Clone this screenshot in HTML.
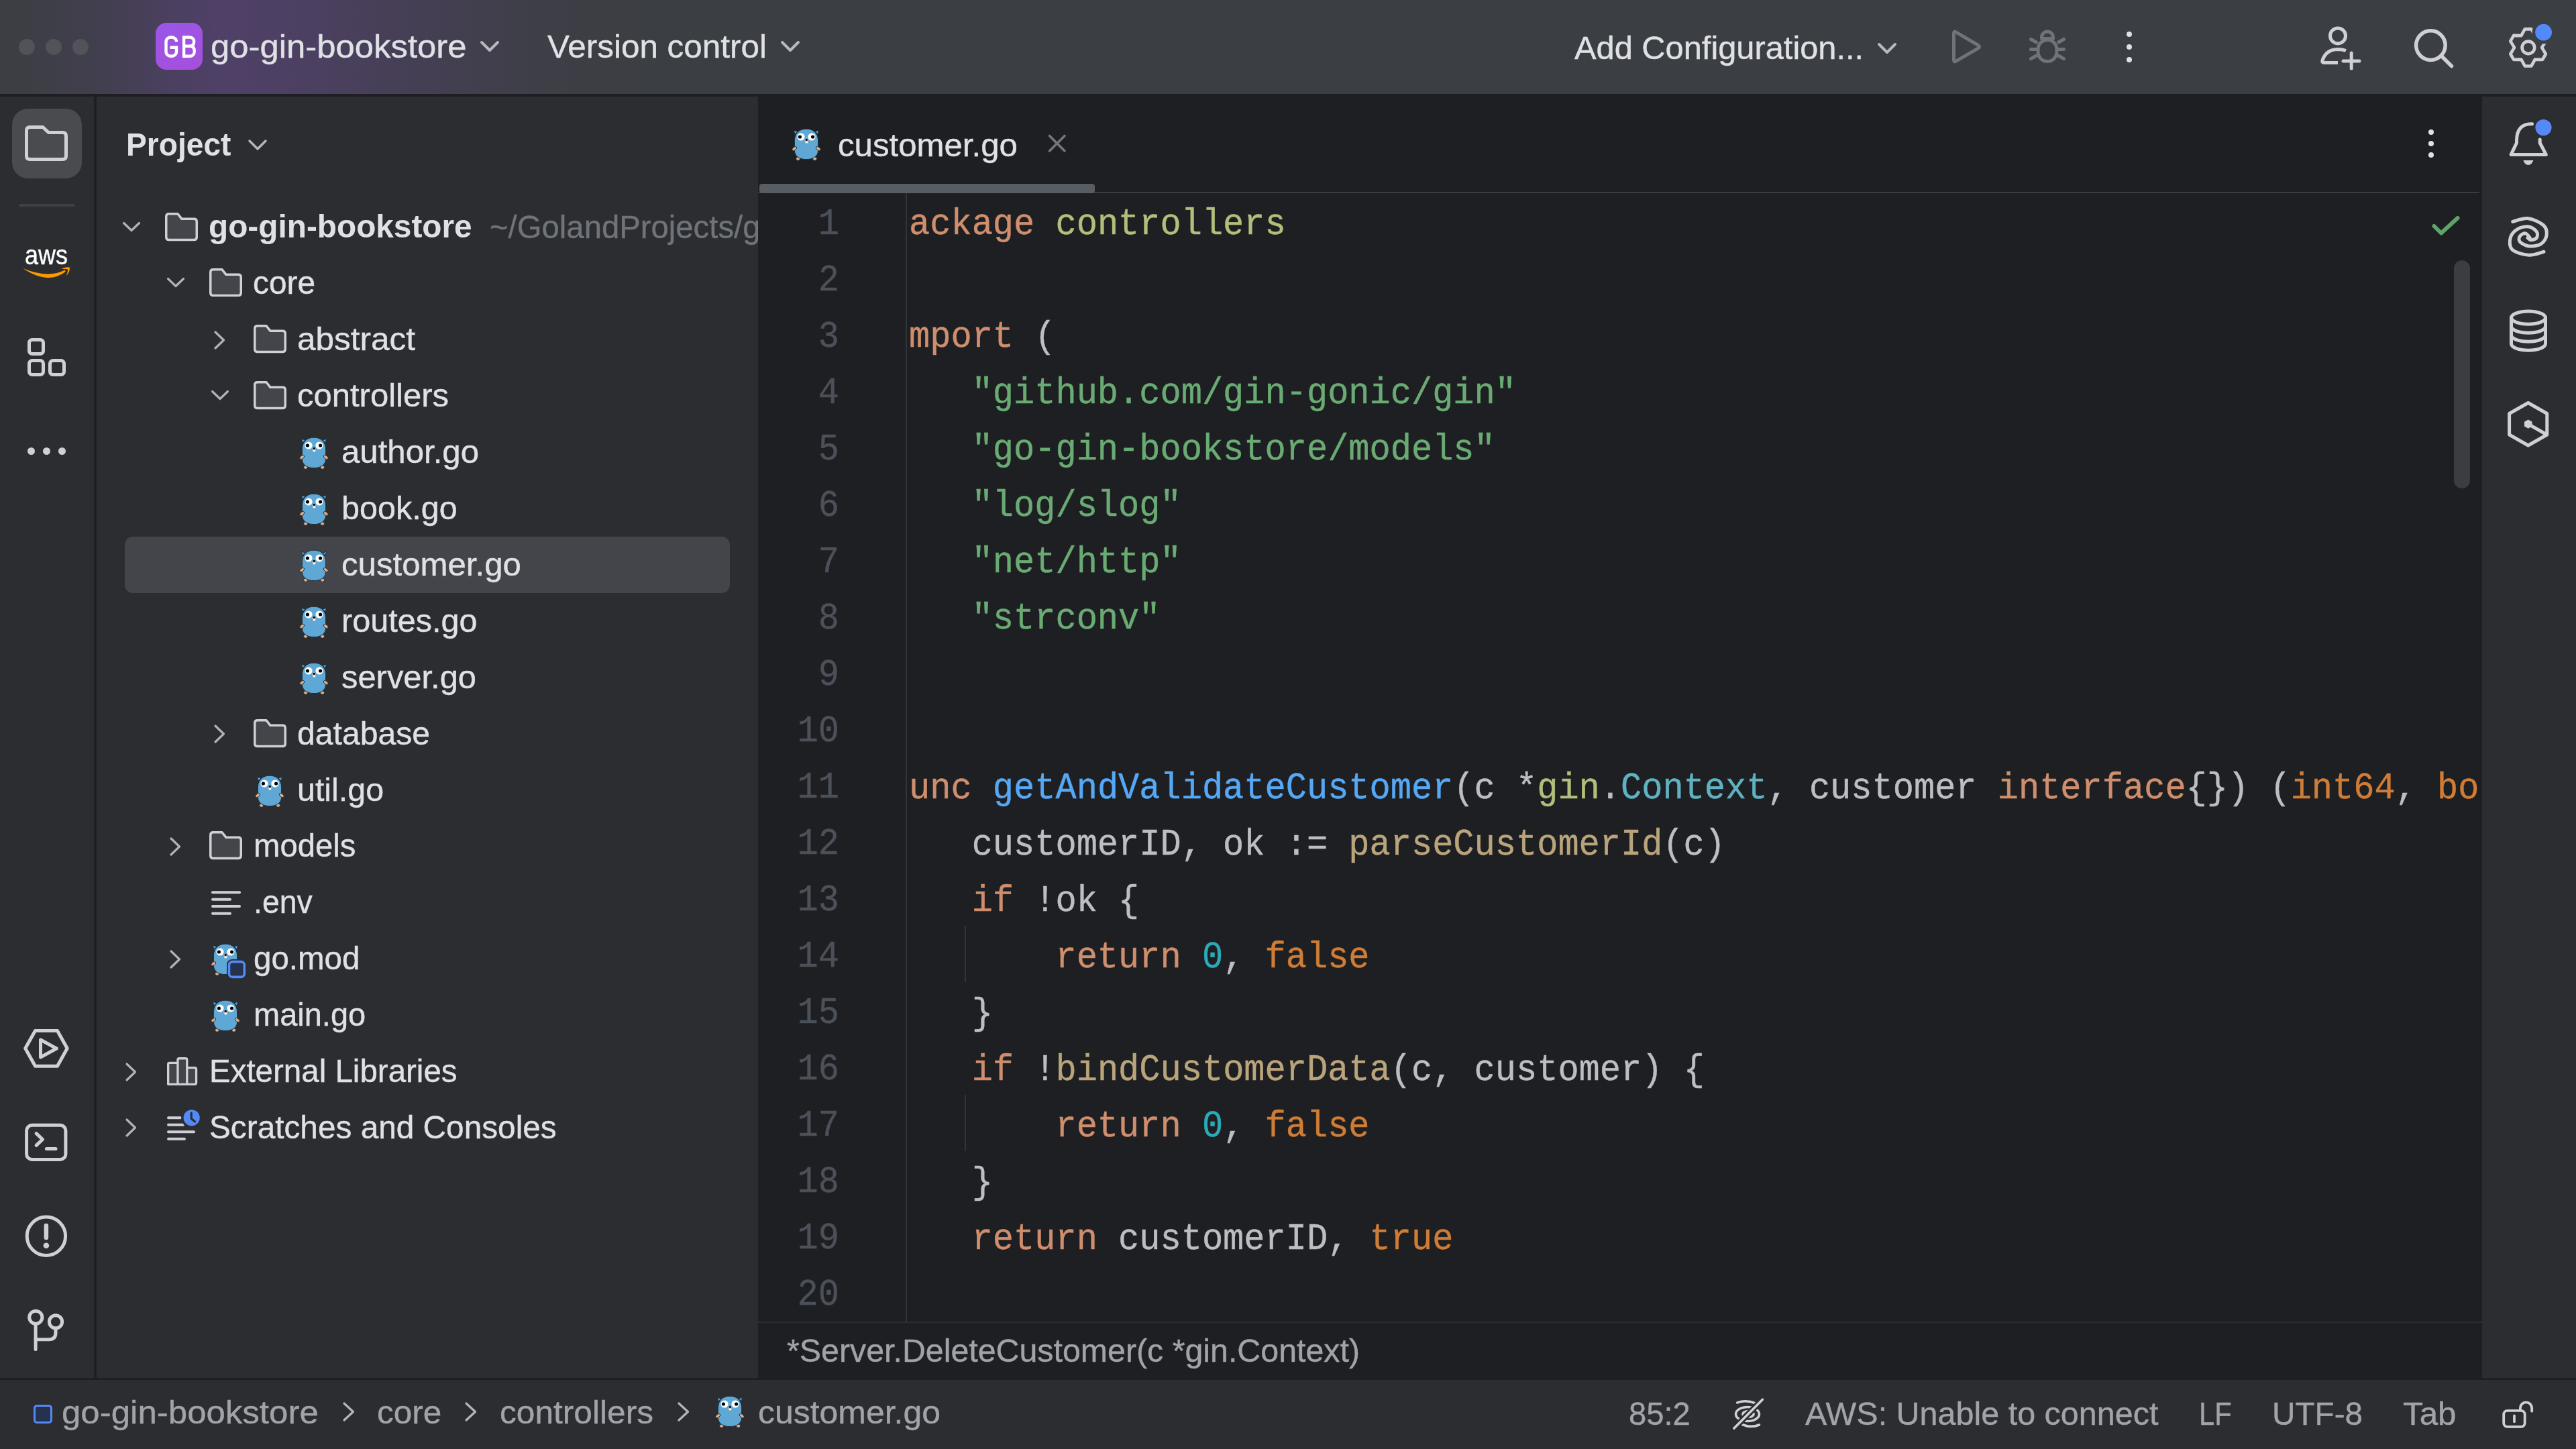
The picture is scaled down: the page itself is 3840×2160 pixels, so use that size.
<!DOCTYPE html><html><head><meta charset="utf-8"><style>html,body{margin:0;padding:0;width:3840px;height:2160px;overflow:hidden;background:#2b2d30}.t{position:absolute;white-space:pre;font-family:"Liberation Sans",sans-serif;-webkit-text-stroke:0.4px currentColor}</style></head><body><div style="position:absolute;left:0px;top:0px;width:3840px;height:2160px;background:#2b2d30"></div>
<div style="position:absolute;left:0px;top:0px;width:3840px;height:140px;background:#3b3e42"></div>
<div style="position:absolute;left:0px;top:0px;width:1400px;height:140px;background:linear-gradient(90deg, rgba(112,68,165,0) 0px, rgba(112,68,165,0.10) 130px, rgba(112,68,165,0.30) 260px, rgba(112,68,165,0.38) 330px, rgba(112,68,165,0.32) 450px, rgba(112,68,165,0.20) 600px, rgba(112,68,165,0.08) 760px, rgba(112,68,165,0.02) 880px, rgba(112,68,165,0) 980px)"></div>
<div style="position:absolute;left:0px;top:140px;width:3840px;height:4px;background:#1e1f22"></div>
<div style="position:absolute;left:140px;top:144px;width:4px;height:1910px;background:#1e1f22"></div>
<div style="position:absolute;left:1130px;top:142px;width:2570px;height:1912px;background:#1e1f22"></div>
<div style="position:absolute;left:0px;top:2054px;width:3840px;height:3px;background:#1e1f22"></div>
<div style="position:absolute;left:28px;top:58px;width:24px;height:24px;border-radius:12px;background:#505357"></div>
<div style="position:absolute;left:68px;top:58px;width:24px;height:24px;border-radius:12px;background:#505357"></div>
<div style="position:absolute;left:108px;top:58px;width:24px;height:24px;border-radius:12px;background:#505357"></div>
<div style="position:absolute;left:232px;top:34px;width:70px;height:70px;border-radius:16px;background:linear-gradient(160deg,#9a56e8 0%,#a64fdc 100%)"></div>
<svg style="position:absolute;left:240px;top:48px;overflow:visible" width="60" height="45" viewBox="0 0 60 45"><g fill="none" stroke="#ffffff" stroke-width="4.4"><path d="M23 14.2 C23 9.8 19.6 7.5 15.3 7.5 C11 7.5 7.5 9.8 7.5 14.5 V28.8 C7.5 33.5 11 35.8 15.3 35.8 C19.6 35.8 23 33.5 23 28.8 V22.8 H13.5"/><path d="M34.1 35.8 V7.5 H42 C46.8 7.5 49.2 10.2 49.2 14.2 C49.2 18.2 46.8 20.8 42 20.8 H34.1 M42 20.8 H43 C48 20.8 49.8 24 49.8 28.2 C49.8 32.6 47.4 35.8 43 35.8 H32"/></g></svg>
<div class="t" style="left:313.5px;top:37.3px;font-size:49px;line-height:64px;color:#dfe1e5;font-weight:normal;font-family:'Liberation Sans', sans-serif;transform:scaleX(1.0374);transform-origin:0 0;">go-gin-bookstore</div>
<svg style="position:absolute;left:716px;top:61px;overflow:visible" width="28" height="16" viewBox="0 0 28 16"><polyline points="2,2 14.0,14 26,2" fill="none" stroke="#b8bac0" stroke-width="4" stroke-linecap="round" stroke-linejoin="round"/></svg>
<div class="t" style="left:816.0px;top:37.3px;font-size:49px;line-height:64px;color:#dfe1e5;font-weight:normal;font-family:'Liberation Sans', sans-serif;transform:scaleX(1.0088);transform-origin:0 0;">Version control</div>
<svg style="position:absolute;left:1164px;top:61px;overflow:visible" width="28" height="16" viewBox="0 0 28 16"><polyline points="2,2 14.0,14 26,2" fill="none" stroke="#b8bac0" stroke-width="4" stroke-linecap="round" stroke-linejoin="round"/></svg>
<div class="t" style="left:2346.8px;top:39.0px;font-size:49px;line-height:64px;color:#dfe1e5;font-weight:normal;font-family:'Liberation Sans', sans-serif;transform:scaleX(0.9955);transform-origin:0 0;">Add Configuration...</div>
<svg style="position:absolute;left:2799px;top:64px;overflow:visible" width="28" height="16" viewBox="0 0 28 16"><polyline points="2,2 14.0,14 26,2" fill="none" stroke="#b8bac0" stroke-width="4" stroke-linecap="round" stroke-linejoin="round"/></svg>
<svg style="position:absolute;left:2900px;top:40px;overflow:visible" width="60" height="60" viewBox="0 0 60 60"><path d="M12.5 9.5 Q12.5 6 15.8 7.9 L49 27.5 Q52 29.7 49 31.8 L15.8 51.2 Q12.5 53 12.5 49.5 Z" fill="none" stroke="#6f737a" stroke-width="5" stroke-linejoin="round"/></svg>
<svg style="position:absolute;left:3020px;top:40px;overflow:visible" width="64" height="60" viewBox="0 0 64 60"><g fill="none" stroke="#6f737a" stroke-width="5" stroke-linecap="round" stroke-linejoin="round"><path d="M23.5 17.5 V15.5 A8.5 8.5 0 0 1 40.5 15.5 V17.5 Z"/><rect x="18.1" y="19.5" width="27.8" height="32" rx="13.9" ry="14"/><line x1="7.5" y1="18.5" x2="15.5" y2="23"/><line x1="56.5" y1="18.5" x2="48.5" y2="23"/><line x1="7.5" y1="33.4" x2="15.5" y2="33.4"/><line x1="56.5" y1="33.4" x2="48.5" y2="33.4"/><line x1="7.5" y1="47.7" x2="15.5" y2="43"/><line x1="56.5" y1="47.7" x2="48.5" y2="43"/></g></svg>
<div style="position:absolute;left:3170px;top:47px;width:8px;height:8px;border-radius:4px;background:#dfe1e5"></div>
<div style="position:absolute;left:3170px;top:66px;width:8px;height:8px;border-radius:4px;background:#dfe1e5"></div>
<div style="position:absolute;left:3170px;top:85px;width:8px;height:8px;border-radius:4px;background:#dfe1e5"></div>
<svg style="position:absolute;left:3450px;top:30px;overflow:visible" width="80" height="80" viewBox="0 0 80 80"><g fill="none" stroke="#ced0d6" stroke-width="5" stroke-linecap="round"><circle cx="35" cy="23.4" r="11.5"/><path d="M35 63.5 H14 Q11 63.5 12 60 Q17 44 35 43.5 Q42 43.5 47 45.5" stroke-linecap="butt"/><line x1="55.2" y1="49" x2="55.2" y2="72"/><line x1="43" y1="61.1" x2="67" y2="61.1"/></g></svg>
<svg style="position:absolute;left:3590px;top:30px;overflow:visible" width="80" height="80" viewBox="0 0 80 80"><g fill="none" stroke="#ced0d6" stroke-width="5.5" stroke-linecap="round"><circle cx="33.4" cy="37.6" r="21.8"/><line x1="49" y1="53" x2="64.5" y2="68.5"/></g></svg>
<svg style="position:absolute;left:3730px;top:30px;overflow:visible" width="80" height="80" viewBox="0 0 80 80"><defs><mask id="gm"><rect x="0" y="0" width="80" height="80" fill="white"/><circle cx="61.6" cy="18.2" r="17" fill="black"/></mask></defs><g mask="url(#gm)" fill="none" stroke="#ced0d6" stroke-width="4.6" stroke-linejoin="round"><path d="M43.46 13.33 L33.74 13.33 L28.35 23.15 L17.15 22.90 L12.29 31.32 L18.10 40.90 L12.29 50.48 L17.15 58.90 L28.35 58.65 L33.74 68.47 L43.46 68.47 L48.85 58.65 L60.05 58.90 L64.91 50.48 L59.10 40.90 L64.91 31.32 L60.05 22.90 L48.85 23.15 Z"/><circle cx="38.9" cy="40.9" r="9.3"/></g><circle cx="61.6" cy="18.2" r="12.4" fill="#548af7"/></svg>
<div style="position:absolute;left:18px;top:162px;width:104px;height:104px;border-radius:24px;background:#4a4b4e"></div>
<svg style="position:absolute;left:37px;top:187px;overflow:visible" width="64" height="53" viewBox="0 0 64 53"><path d="M2.5 7.5 Q2.5 2.5 7.5 2.5 H26.88 L35.36 10.45 H56.5 Q61.5 10.45 61.5 15.45 V45.5 Q61.5 50.5 56.5 50.5 H7.5 Q2.5 50.5 2.5 45.5 Z" fill="none" stroke="#ced0d6" stroke-width="5" stroke-linejoin="round"/></svg>
<div style="position:absolute;left:28px;top:304px;width:84px;height:4px;background:#3e4044;border-radius:2px"></div>
<div class="t" style="left:37.1px;top:353.7px;font-size:40px;line-height:52px;color:#ffffff;font-weight:normal;font-family:'Liberation Sans', sans-serif;transform:scaleX(0.8989);transform-origin:0 0;">aws</div>
<svg style="position:absolute;left:0px;top:0px;overflow:visible" width="140" height="440" viewBox="0 0 140 440"><path d="M33.9 399.7 Q71.1 425.25 97.8 405 L96.5 402.6 Q71.75 415.85 33.9 399.7 Z" fill="#ff9900"/><path d="M91.2 400.8 Q97.5 397.4 103.9 398.6 Q104.6 405.2 98.6 411.4 Q101.6 404.8 100.9 401.6 Q96.5 400.6 91.2 400.8 Z" fill="#ff9900"/></svg>
<div style="position:absolute;left:41px;top:504px;width:26px;height:26px;border:5px solid #ced0d6;border-radius:7px;box-sizing:border-box"></div>
<div style="position:absolute;left:41px;top:535px;width:26px;height:26px;border:5px solid #ced0d6;border-radius:7px;box-sizing:border-box"></div>
<div style="position:absolute;left:72px;top:535px;width:26px;height:26px;border:5px solid #ced0d6;border-radius:7px;box-sizing:border-box"></div>
<div style="position:absolute;left:40.5px;top:667px;width:11px;height:11px;border-radius:6px;background:#ced0d6"></div>
<div style="position:absolute;left:63.5px;top:667px;width:11px;height:11px;border-radius:6px;background:#ced0d6"></div>
<div style="position:absolute;left:86.5px;top:667px;width:11px;height:11px;border-radius:6px;background:#ced0d6"></div>
<svg style="position:absolute;left:0px;top:1500px;overflow:visible" width="140" height="540" viewBox="0 0 140 540"><g fill="none" stroke="#ced0d6" stroke-width="5" stroke-linecap="round" stroke-linejoin="round"><path d="M37.7 62.8 L52.5 36.5 H85.5 L100.2 62.8 L85.5 89.3 H52.5 Z"/><path d="M60.5 50 L84.3 63 L60.5 76 Z"/><rect x="39.6" y="177.3" width="58.3" height="51.1" rx="8"/><path d="M54.1 189.7 L63.5 198.5 L54.1 207.4"/><line x1="69.4" y1="212.4" x2="83" y2="212.4"/><circle cx="68.9" cy="342.8" r="28.7"/><line x1="68.9" y1="327" x2="68.9" y2="345" stroke-width="6.5"/><circle cx="53.3" cy="463.8" r="9.6"/><circle cx="83" cy="470.4" r="9.6"/><line x1="53.1" y1="474" x2="53.1" y2="511.5"/><path d="M83 480 V487 Q83 496.8 73 496.8 H53.1"/></g><circle cx="68.9" cy="356.7" r="4.3" fill="#ced0d6"/></svg>
<div class="t" style="left:187.6px;top:183.7px;font-size:48.5px;line-height:63px;color:#dfe1e5;font-weight:bold;font-family:'Liberation Sans', sans-serif;transform:scaleX(0.9513);transform-origin:0 0;-webkit-text-stroke:0;">Project</div>
<svg style="position:absolute;left:370px;top:208px;overflow:visible" width="28" height="16" viewBox="0 0 28 16"><polyline points="2,2 14.0,14 26,2" fill="none" stroke="#b4b6bb" stroke-width="3.5" stroke-linecap="round" stroke-linejoin="round"/></svg>
<div style="position:absolute;left:186px;top:800px;width:902px;height:84px;border-radius:12px;background:#43454a"></div>
<svg style="position:absolute;left:182px;top:329.5px;overflow:visible" width="28" height="16" viewBox="0 0 28 16"><polyline points="2.5,2.5 14,13.5 25.5,2.5" fill="none" stroke="#b0b3b8" stroke-width="3.2" stroke-linecap="round" stroke-linejoin="round"/></svg>
<svg style="position:absolute;left:245.5px;top:316.5px;overflow:visible" width="49" height="43" viewBox="0 0 49 43"><path d="M1.75 5.75 Q1.75 1.75 5.75 1.75 H19 L25 9.3 H43.25 Q47.25 9.3 47.25 13.3 V36.5 Q47.25 40.5 43.25 40.5 H5.75 Q1.75 40.5 1.75 36.5 Z" fill="#43454a" stroke="#ced0d6" stroke-width="3.5" stroke-linejoin="round"/></svg>
<div class="t" style="left:311.4px;top:306.2px;font-size:48.5px;line-height:63px;color:#dfe1e5;font-weight:bold;font-family:'Liberation Sans', sans-serif;transform:scaleX(0.9848);transform-origin:0 0;-webkit-text-stroke:0;">go-gin-bookstore</div>
<div style="position:absolute;left:700px;top:290px;width:430px;height:90px;overflow:hidden">
<div class="t" style="left:30.4px;top:15.5px;font-size:49px;line-height:64px;color:#6f737a;font-weight:normal;font-family:'Liberation Sans', sans-serif;transform:scaleX(0.965);transform-origin:0 0;">~/GolandProjects/go-gin-bookstore</div>
</div>
<svg style="position:absolute;left:248px;top:413.4px;overflow:visible" width="28" height="16" viewBox="0 0 28 16"><polyline points="2.5,2.5 14,13.5 25.5,2.5" fill="none" stroke="#b0b3b8" stroke-width="3.2" stroke-linecap="round" stroke-linejoin="round"/></svg>
<svg style="position:absolute;left:311.5px;top:400.4px;overflow:visible" width="49" height="43" viewBox="0 0 49 43"><path d="M1.75 5.75 Q1.75 1.75 5.75 1.75 H19 L25 9.3 H43.25 Q47.25 9.3 47.25 13.3 V36.5 Q47.25 40.5 43.25 40.5 H5.75 Q1.75 40.5 1.75 36.5 Z" fill="#43454a" stroke="#ced0d6" stroke-width="3.5" stroke-linejoin="round"/></svg>
<div class="t" style="left:377.3px;top:389.4px;font-size:49px;line-height:64px;color:#dfe1e5;font-weight:normal;font-family:'Liberation Sans', sans-serif;transform:scaleX(0.9769);transform-origin:0 0;">core</div>
<svg style="position:absolute;left:319px;top:492.79999999999995px;overflow:visible" width="17" height="28" viewBox="0 0 17 28"><polyline points="2,2 14.5,14 2,26" fill="none" stroke="#b0b3b8" stroke-width="3.2" stroke-linecap="round" stroke-linejoin="round"/></svg>
<svg style="position:absolute;left:377.5px;top:484.29999999999995px;overflow:visible" width="49" height="43" viewBox="0 0 49 43"><path d="M1.75 5.75 Q1.75 1.75 5.75 1.75 H19 L25 9.3 H43.25 Q47.25 9.3 47.25 13.3 V36.5 Q47.25 40.5 43.25 40.5 H5.75 Q1.75 40.5 1.75 36.5 Z" fill="#43454a" stroke="#ced0d6" stroke-width="3.5" stroke-linejoin="round"/></svg>
<div class="t" style="left:443.1px;top:473.3px;font-size:49px;line-height:64px;color:#dfe1e5;font-weight:normal;font-family:'Liberation Sans', sans-serif;transform:scaleX(1.0098);transform-origin:0 0;">abstract</div>
<svg style="position:absolute;left:314px;top:581.2px;overflow:visible" width="28" height="16" viewBox="0 0 28 16"><polyline points="2.5,2.5 14,13.5 25.5,2.5" fill="none" stroke="#b0b3b8" stroke-width="3.2" stroke-linecap="round" stroke-linejoin="round"/></svg>
<svg style="position:absolute;left:377.5px;top:568.2px;overflow:visible" width="49" height="43" viewBox="0 0 49 43"><path d="M1.75 5.75 Q1.75 1.75 5.75 1.75 H19 L25 9.3 H43.25 Q47.25 9.3 47.25 13.3 V36.5 Q47.25 40.5 43.25 40.5 H5.75 Q1.75 40.5 1.75 36.5 Z" fill="#43454a" stroke="#ced0d6" stroke-width="3.5" stroke-linejoin="round"/></svg>
<div class="t" style="left:443.1px;top:557.2px;font-size:49px;line-height:64px;color:#dfe1e5;font-weight:normal;font-family:'Liberation Sans', sans-serif;transform:scaleX(0.9998);transform-origin:0 0;">controllers</div>
<svg style="position:absolute;left:447.8px;top:651.1px;overflow:visible" width="40" height="48" viewBox="0 0 40 48"><g stroke="#1b2b38" stroke-width="0.9"><path d="M2.8 9 L1.6 3.4 L7 5 Z" fill="#5fa8d6"/><path d="M37.2 9 L38.4 3.4 L33 5 Z" fill="#5fa8d6"/><ellipse cx="7.6" cy="45.6" rx="3" ry="2.7" fill="#e0ac86"/><ellipse cx="32.6" cy="45.6" rx="3" ry="2.7" fill="#e0ac86"/><path d="M2.4 19 C2.4 7 10 1.2 20 1.2 C30 1.2 37.6 7 37.6 19 V33 C37.6 42 30 46.6 20 46.6 C10 46.6 2.4 42 2.4 33 Z" fill="#5fa8d6"/><ellipse cx="2.2" cy="30.6" rx="4" ry="2.4" transform="rotate(-40 2.2 30.6)" fill="#e0ac86"/><ellipse cx="37.8" cy="30.6" rx="4" ry="2.4" transform="rotate(40 37.8 30.6)" fill="#e0ac86"/></g><circle cx="12" cy="13" r="5.6" fill="#fff"/><circle cx="28" cy="13" r="5.6" fill="#fff"/><circle cx="10.4" cy="13" r="2.6" fill="#000"/><circle cx="29.6" cy="13" r="2.6" fill="#000"/><ellipse cx="20.3" cy="18.6" rx="3.3" ry="1.7" fill="#d9a785"/><ellipse cx="20.3" cy="17.5" rx="1.7" ry="1.4" fill="#000"/><rect x="18.6" y="19.7" width="3.6" height="2.6" fill="#fff"/></svg>
<div class="t" style="left:508.8px;top:641.1px;font-size:49px;line-height:64px;color:#dfe1e5;font-weight:normal;font-family:'Liberation Sans', sans-serif;transform:scaleX(1.0033);transform-origin:0 0;">author.go</div>
<svg style="position:absolute;left:447.8px;top:735.0px;overflow:visible" width="40" height="48" viewBox="0 0 40 48"><g stroke="#1b2b38" stroke-width="0.9"><path d="M2.8 9 L1.6 3.4 L7 5 Z" fill="#5fa8d6"/><path d="M37.2 9 L38.4 3.4 L33 5 Z" fill="#5fa8d6"/><ellipse cx="7.6" cy="45.6" rx="3" ry="2.7" fill="#e0ac86"/><ellipse cx="32.6" cy="45.6" rx="3" ry="2.7" fill="#e0ac86"/><path d="M2.4 19 C2.4 7 10 1.2 20 1.2 C30 1.2 37.6 7 37.6 19 V33 C37.6 42 30 46.6 20 46.6 C10 46.6 2.4 42 2.4 33 Z" fill="#5fa8d6"/><ellipse cx="2.2" cy="30.6" rx="4" ry="2.4" transform="rotate(-40 2.2 30.6)" fill="#e0ac86"/><ellipse cx="37.8" cy="30.6" rx="4" ry="2.4" transform="rotate(40 37.8 30.6)" fill="#e0ac86"/></g><circle cx="12" cy="13" r="5.6" fill="#fff"/><circle cx="28" cy="13" r="5.6" fill="#fff"/><circle cx="10.4" cy="13" r="2.6" fill="#000"/><circle cx="29.6" cy="13" r="2.6" fill="#000"/><ellipse cx="20.3" cy="18.6" rx="3.3" ry="1.7" fill="#d9a785"/><ellipse cx="20.3" cy="17.5" rx="1.7" ry="1.4" fill="#000"/><rect x="18.6" y="19.7" width="3.6" height="2.6" fill="#fff"/></svg>
<div class="t" style="left:508.8px;top:725.0px;font-size:49px;line-height:64px;color:#dfe1e5;font-weight:normal;font-family:'Liberation Sans', sans-serif;transform:scaleX(0.9900);transform-origin:0 0;">book.go</div>
<svg style="position:absolute;left:447.8px;top:818.9000000000001px;overflow:visible" width="40" height="48" viewBox="0 0 40 48"><g stroke="#1b2b38" stroke-width="0.9"><path d="M2.8 9 L1.6 3.4 L7 5 Z" fill="#5fa8d6"/><path d="M37.2 9 L38.4 3.4 L33 5 Z" fill="#5fa8d6"/><ellipse cx="7.6" cy="45.6" rx="3" ry="2.7" fill="#e0ac86"/><ellipse cx="32.6" cy="45.6" rx="3" ry="2.7" fill="#e0ac86"/><path d="M2.4 19 C2.4 7 10 1.2 20 1.2 C30 1.2 37.6 7 37.6 19 V33 C37.6 42 30 46.6 20 46.6 C10 46.6 2.4 42 2.4 33 Z" fill="#5fa8d6"/><ellipse cx="2.2" cy="30.6" rx="4" ry="2.4" transform="rotate(-40 2.2 30.6)" fill="#e0ac86"/><ellipse cx="37.8" cy="30.6" rx="4" ry="2.4" transform="rotate(40 37.8 30.6)" fill="#e0ac86"/></g><circle cx="12" cy="13" r="5.6" fill="#fff"/><circle cx="28" cy="13" r="5.6" fill="#fff"/><circle cx="10.4" cy="13" r="2.6" fill="#000"/><circle cx="29.6" cy="13" r="2.6" fill="#000"/><ellipse cx="20.3" cy="18.6" rx="3.3" ry="1.7" fill="#d9a785"/><ellipse cx="20.3" cy="17.5" rx="1.7" ry="1.4" fill="#000"/><rect x="18.6" y="19.7" width="3.6" height="2.6" fill="#fff"/></svg>
<div class="t" style="left:508.8px;top:808.9px;font-size:49px;line-height:64px;color:#dfe1e5;font-weight:normal;font-family:'Liberation Sans', sans-serif;transform:scaleX(1.0037);transform-origin:0 0;">customer.go</div>
<svg style="position:absolute;left:447.8px;top:902.8000000000001px;overflow:visible" width="40" height="48" viewBox="0 0 40 48"><g stroke="#1b2b38" stroke-width="0.9"><path d="M2.8 9 L1.6 3.4 L7 5 Z" fill="#5fa8d6"/><path d="M37.2 9 L38.4 3.4 L33 5 Z" fill="#5fa8d6"/><ellipse cx="7.6" cy="45.6" rx="3" ry="2.7" fill="#e0ac86"/><ellipse cx="32.6" cy="45.6" rx="3" ry="2.7" fill="#e0ac86"/><path d="M2.4 19 C2.4 7 10 1.2 20 1.2 C30 1.2 37.6 7 37.6 19 V33 C37.6 42 30 46.6 20 46.6 C10 46.6 2.4 42 2.4 33 Z" fill="#5fa8d6"/><ellipse cx="2.2" cy="30.6" rx="4" ry="2.4" transform="rotate(-40 2.2 30.6)" fill="#e0ac86"/><ellipse cx="37.8" cy="30.6" rx="4" ry="2.4" transform="rotate(40 37.8 30.6)" fill="#e0ac86"/></g><circle cx="12" cy="13" r="5.6" fill="#fff"/><circle cx="28" cy="13" r="5.6" fill="#fff"/><circle cx="10.4" cy="13" r="2.6" fill="#000"/><circle cx="29.6" cy="13" r="2.6" fill="#000"/><ellipse cx="20.3" cy="18.6" rx="3.3" ry="1.7" fill="#d9a785"/><ellipse cx="20.3" cy="17.5" rx="1.7" ry="1.4" fill="#000"/><rect x="18.6" y="19.7" width="3.6" height="2.6" fill="#fff"/></svg>
<div class="t" style="left:508.8px;top:892.8px;font-size:49px;line-height:64px;color:#dfe1e5;font-weight:normal;font-family:'Liberation Sans', sans-serif;transform:scaleX(0.9915);transform-origin:0 0;">routes.go</div>
<svg style="position:absolute;left:447.8px;top:986.7px;overflow:visible" width="40" height="48" viewBox="0 0 40 48"><g stroke="#1b2b38" stroke-width="0.9"><path d="M2.8 9 L1.6 3.4 L7 5 Z" fill="#5fa8d6"/><path d="M37.2 9 L38.4 3.4 L33 5 Z" fill="#5fa8d6"/><ellipse cx="7.6" cy="45.6" rx="3" ry="2.7" fill="#e0ac86"/><ellipse cx="32.6" cy="45.6" rx="3" ry="2.7" fill="#e0ac86"/><path d="M2.4 19 C2.4 7 10 1.2 20 1.2 C30 1.2 37.6 7 37.6 19 V33 C37.6 42 30 46.6 20 46.6 C10 46.6 2.4 42 2.4 33 Z" fill="#5fa8d6"/><ellipse cx="2.2" cy="30.6" rx="4" ry="2.4" transform="rotate(-40 2.2 30.6)" fill="#e0ac86"/><ellipse cx="37.8" cy="30.6" rx="4" ry="2.4" transform="rotate(40 37.8 30.6)" fill="#e0ac86"/></g><circle cx="12" cy="13" r="5.6" fill="#fff"/><circle cx="28" cy="13" r="5.6" fill="#fff"/><circle cx="10.4" cy="13" r="2.6" fill="#000"/><circle cx="29.6" cy="13" r="2.6" fill="#000"/><ellipse cx="20.3" cy="18.6" rx="3.3" ry="1.7" fill="#d9a785"/><ellipse cx="20.3" cy="17.5" rx="1.7" ry="1.4" fill="#000"/><rect x="18.6" y="19.7" width="3.6" height="2.6" fill="#fff"/></svg>
<div class="t" style="left:508.8px;top:976.7px;font-size:49px;line-height:64px;color:#dfe1e5;font-weight:normal;font-family:'Liberation Sans', sans-serif;transform:scaleX(0.9973);transform-origin:0 0;">server.go</div>
<svg style="position:absolute;left:319px;top:1080.1px;overflow:visible" width="17" height="28" viewBox="0 0 17 28"><polyline points="2,2 14.5,14 2,26" fill="none" stroke="#b0b3b8" stroke-width="3.2" stroke-linecap="round" stroke-linejoin="round"/></svg>
<svg style="position:absolute;left:377.5px;top:1071.6px;overflow:visible" width="49" height="43" viewBox="0 0 49 43"><path d="M1.75 5.75 Q1.75 1.75 5.75 1.75 H19 L25 9.3 H43.25 Q47.25 9.3 47.25 13.3 V36.5 Q47.25 40.5 43.25 40.5 H5.75 Q1.75 40.5 1.75 36.5 Z" fill="#43454a" stroke="#ced0d6" stroke-width="3.5" stroke-linejoin="round"/></svg>
<div class="t" style="left:442.8px;top:1060.6px;font-size:49px;line-height:64px;color:#dfe1e5;font-weight:normal;font-family:'Liberation Sans', sans-serif;transform:scaleX(0.9820);transform-origin:0 0;">database</div>
<svg style="position:absolute;left:381.8px;top:1154.5px;overflow:visible" width="40" height="48" viewBox="0 0 40 48"><g stroke="#1b2b38" stroke-width="0.9"><path d="M2.8 9 L1.6 3.4 L7 5 Z" fill="#5fa8d6"/><path d="M37.2 9 L38.4 3.4 L33 5 Z" fill="#5fa8d6"/><ellipse cx="7.6" cy="45.6" rx="3" ry="2.7" fill="#e0ac86"/><ellipse cx="32.6" cy="45.6" rx="3" ry="2.7" fill="#e0ac86"/><path d="M2.4 19 C2.4 7 10 1.2 20 1.2 C30 1.2 37.6 7 37.6 19 V33 C37.6 42 30 46.6 20 46.6 C10 46.6 2.4 42 2.4 33 Z" fill="#5fa8d6"/><ellipse cx="2.2" cy="30.6" rx="4" ry="2.4" transform="rotate(-40 2.2 30.6)" fill="#e0ac86"/><ellipse cx="37.8" cy="30.6" rx="4" ry="2.4" transform="rotate(40 37.8 30.6)" fill="#e0ac86"/></g><circle cx="12" cy="13" r="5.6" fill="#fff"/><circle cx="28" cy="13" r="5.6" fill="#fff"/><circle cx="10.4" cy="13" r="2.6" fill="#000"/><circle cx="29.6" cy="13" r="2.6" fill="#000"/><ellipse cx="20.3" cy="18.6" rx="3.3" ry="1.7" fill="#d9a785"/><ellipse cx="20.3" cy="17.5" rx="1.7" ry="1.4" fill="#000"/><rect x="18.6" y="19.7" width="3.6" height="2.6" fill="#fff"/></svg>
<div class="t" style="left:442.8px;top:1144.5px;font-size:49px;line-height:64px;color:#dfe1e5;font-weight:normal;font-family:'Liberation Sans', sans-serif;transform:scaleX(0.9875);transform-origin:0 0;">util.go</div>
<svg style="position:absolute;left:253px;top:1247.9px;overflow:visible" width="17" height="28" viewBox="0 0 17 28"><polyline points="2,2 14.5,14 2,26" fill="none" stroke="#b0b3b8" stroke-width="3.2" stroke-linecap="round" stroke-linejoin="round"/></svg>
<svg style="position:absolute;left:311.5px;top:1239.4px;overflow:visible" width="49" height="43" viewBox="0 0 49 43"><path d="M1.75 5.75 Q1.75 1.75 5.75 1.75 H19 L25 9.3 H43.25 Q47.25 9.3 47.25 13.3 V36.5 Q47.25 40.5 43.25 40.5 H5.75 Q1.75 40.5 1.75 36.5 Z" fill="#43454a" stroke="#ced0d6" stroke-width="3.5" stroke-linejoin="round"/></svg>
<div class="t" style="left:377.6px;top:1228.4px;font-size:49px;line-height:64px;color:#dfe1e5;font-weight:normal;font-family:'Liberation Sans', sans-serif;transform:scaleX(0.9650);transform-origin:0 0;">models</div>
<svg style="position:absolute;left:315px;top:1325.3000000000002px;overflow:visible" width="46" height="42" viewBox="0 0 46 42"><g stroke="#ced0d6" stroke-width="4" stroke-linecap="round"><line x1="2" y1="5.2" x2="42" y2="5.2"/><line x1="2" y1="15.8" x2="28" y2="15.8"/><line x1="2" y1="26.1" x2="42" y2="26.1"/><line x1="2" y1="36.8" x2="28" y2="36.8"/></g></svg>
<div class="t" style="left:377.6px;top:1312.3px;font-size:49px;line-height:64px;color:#dfe1e5;font-weight:normal;font-family:'Liberation Sans', sans-serif;transform:scaleX(0.9470);transform-origin:0 0;">.env</div>
<svg style="position:absolute;left:253px;top:1415.7px;overflow:visible" width="17" height="28" viewBox="0 0 17 28"><polyline points="2,2 14.5,14 2,26" fill="none" stroke="#b0b3b8" stroke-width="3.2" stroke-linecap="round" stroke-linejoin="round"/></svg>
<svg style="position:absolute;left:315.8px;top:1406.2px;overflow:visible" width="40" height="48" viewBox="0 0 40 48"><g stroke="#1b2b38" stroke-width="0.9"><path d="M2.8 9 L1.6 3.4 L7 5 Z" fill="#5fa8d6"/><path d="M37.2 9 L38.4 3.4 L33 5 Z" fill="#5fa8d6"/><ellipse cx="7.6" cy="45.6" rx="3" ry="2.7" fill="#e0ac86"/><ellipse cx="32.6" cy="45.6" rx="3" ry="2.7" fill="#e0ac86"/><path d="M2.4 19 C2.4 7 10 1.2 20 1.2 C30 1.2 37.6 7 37.6 19 V33 C37.6 42 30 46.6 20 46.6 C10 46.6 2.4 42 2.4 33 Z" fill="#5fa8d6"/><ellipse cx="2.2" cy="30.6" rx="4" ry="2.4" transform="rotate(-40 2.2 30.6)" fill="#e0ac86"/><ellipse cx="37.8" cy="30.6" rx="4" ry="2.4" transform="rotate(40 37.8 30.6)" fill="#e0ac86"/></g><circle cx="12" cy="13" r="5.6" fill="#fff"/><circle cx="28" cy="13" r="5.6" fill="#fff"/><circle cx="10.4" cy="13" r="2.6" fill="#000"/><circle cx="29.6" cy="13" r="2.6" fill="#000"/><ellipse cx="20.3" cy="18.6" rx="3.3" ry="1.7" fill="#d9a785"/><ellipse cx="20.3" cy="17.5" rx="1.7" ry="1.4" fill="#000"/><rect x="18.6" y="19.7" width="3.6" height="2.6" fill="#fff"/><rect x="22" y="24" width="31" height="31" rx="8" fill="#2b2d30"/><rect x="25.5" y="27.6" width="22.8" height="22.8" rx="5" fill="#25324d" stroke="#548af7" stroke-width="3.6"/></svg>
<div class="t" style="left:377.6px;top:1396.2px;font-size:49px;line-height:64px;color:#dfe1e5;font-weight:normal;font-family:'Liberation Sans', sans-serif;transform:scaleX(0.9693);transform-origin:0 0;">go.mod</div>
<svg style="position:absolute;left:315.8px;top:1490.1000000000001px;overflow:visible" width="40" height="48" viewBox="0 0 40 48"><g stroke="#1b2b38" stroke-width="0.9"><path d="M2.8 9 L1.6 3.4 L7 5 Z" fill="#5fa8d6"/><path d="M37.2 9 L38.4 3.4 L33 5 Z" fill="#5fa8d6"/><ellipse cx="7.6" cy="45.6" rx="3" ry="2.7" fill="#e0ac86"/><ellipse cx="32.6" cy="45.6" rx="3" ry="2.7" fill="#e0ac86"/><path d="M2.4 19 C2.4 7 10 1.2 20 1.2 C30 1.2 37.6 7 37.6 19 V33 C37.6 42 30 46.6 20 46.6 C10 46.6 2.4 42 2.4 33 Z" fill="#5fa8d6"/><ellipse cx="2.2" cy="30.6" rx="4" ry="2.4" transform="rotate(-40 2.2 30.6)" fill="#e0ac86"/><ellipse cx="37.8" cy="30.6" rx="4" ry="2.4" transform="rotate(40 37.8 30.6)" fill="#e0ac86"/></g><circle cx="12" cy="13" r="5.6" fill="#fff"/><circle cx="28" cy="13" r="5.6" fill="#fff"/><circle cx="10.4" cy="13" r="2.6" fill="#000"/><circle cx="29.6" cy="13" r="2.6" fill="#000"/><ellipse cx="20.3" cy="18.6" rx="3.3" ry="1.7" fill="#d9a785"/><ellipse cx="20.3" cy="17.5" rx="1.7" ry="1.4" fill="#000"/><rect x="18.6" y="19.7" width="3.6" height="2.6" fill="#fff"/></svg>
<div class="t" style="left:377.6px;top:1480.1px;font-size:49px;line-height:64px;color:#dfe1e5;font-weight:normal;font-family:'Liberation Sans', sans-serif;transform:scaleX(0.9591);transform-origin:0 0;">main.go</div>
<svg style="position:absolute;left:187px;top:1583.5px;overflow:visible" width="17" height="28" viewBox="0 0 17 28"><polyline points="2,2 14.5,14 2,26" fill="none" stroke="#b0b3b8" stroke-width="3.2" stroke-linecap="round" stroke-linejoin="round"/></svg>
<svg style="position:absolute;left:249px;top:1576.0px;overflow:visible" width="46" height="44" viewBox="0 0 46 44"><g fill="#43454a" stroke="#ced0d6" stroke-width="3.3" stroke-linejoin="round"><path d="M1.65 40.35 V10.3 Q1.65 8.3 3.65 8.3 H15.95 V3.75 Q15.95 1.75 17.95 1.75 H27.75 Q29.75 1.75 29.75 3.75 V15.65 H41.55 Q43.55 15.65 43.55 17.65 V38.35 Q43.55 40.35 41.55 40.35 Z"/><line x1="15.95" y1="8.3" x2="15.95" y2="40.35"/><line x1="29.75" y1="15.65" x2="29.75" y2="40.35"/></g></svg>
<div class="t" style="left:312.0px;top:1564.0px;font-size:49px;line-height:64px;color:#dfe1e5;font-weight:normal;font-family:'Liberation Sans', sans-serif;transform:scaleX(0.9693);transform-origin:0 0;">External Libraries</div>
<svg style="position:absolute;left:187px;top:1667.4px;overflow:visible" width="17" height="28" viewBox="0 0 17 28"><polyline points="2,2 14.5,14 2,26" fill="none" stroke="#b0b3b8" stroke-width="3.2" stroke-linecap="round" stroke-linejoin="round"/></svg>
<svg style="position:absolute;left:249px;top:1650.9px;overflow:visible" width="52" height="52" viewBox="0 0 52 52"><g stroke="#ced0d6" stroke-width="4" stroke-linecap="round"><line x1="2" y1="15.3" x2="20" y2="15.3"/><line x1="2" y1="25.8" x2="24" y2="25.8"/><line x1="2" y1="36.3" x2="40" y2="36.3"/><line x1="2" y1="46.8" x2="26" y2="46.8"/></g><circle cx="36.7" cy="15.3" r="15.5" fill="#2b2d30"/><circle cx="36.7" cy="15.3" r="12.1" fill="#548af7"/><path d="M36.2 8 V16.5 L41.5 21" fill="none" stroke="#2b2d30" stroke-width="3.2" stroke-linecap="round" stroke-linejoin="round"/></svg>
<div class="t" style="left:312.0px;top:1647.9px;font-size:49px;line-height:64px;color:#dfe1e5;font-weight:normal;font-family:'Liberation Sans', sans-serif;transform:scaleX(0.9748);transform-origin:0 0;">Scratches and Consoles</div>
<svg style="position:absolute;left:1182px;top:191px;overflow:visible" width="40" height="48" viewBox="0 0 40 48"><g stroke="#1b2b38" stroke-width="0.9"><path d="M2.8 9 L1.6 3.4 L7 5 Z" fill="#5fa8d6"/><path d="M37.2 9 L38.4 3.4 L33 5 Z" fill="#5fa8d6"/><ellipse cx="7.6" cy="45.6" rx="3" ry="2.7" fill="#e0ac86"/><ellipse cx="32.6" cy="45.6" rx="3" ry="2.7" fill="#e0ac86"/><path d="M2.4 19 C2.4 7 10 1.2 20 1.2 C30 1.2 37.6 7 37.6 19 V33 C37.6 42 30 46.6 20 46.6 C10 46.6 2.4 42 2.4 33 Z" fill="#5fa8d6"/><ellipse cx="2.2" cy="30.6" rx="4" ry="2.4" transform="rotate(-40 2.2 30.6)" fill="#e0ac86"/><ellipse cx="37.8" cy="30.6" rx="4" ry="2.4" transform="rotate(40 37.8 30.6)" fill="#e0ac86"/></g><circle cx="12" cy="13" r="5.6" fill="#fff"/><circle cx="28" cy="13" r="5.6" fill="#fff"/><circle cx="10.4" cy="13" r="2.6" fill="#000"/><circle cx="29.6" cy="13" r="2.6" fill="#000"/><ellipse cx="20.3" cy="18.6" rx="3.3" ry="1.7" fill="#d9a785"/><ellipse cx="20.3" cy="17.5" rx="1.7" ry="1.4" fill="#000"/><rect x="18.6" y="19.7" width="3.6" height="2.6" fill="#fff"/></svg>
<div class="t" style="left:1249.4px;top:183.5px;font-size:49px;line-height:64px;color:#dfe1e5;font-weight:normal;font-family:'Liberation Sans', sans-serif;transform:scaleX(1.0037);transform-origin:0 0;">customer.go</div>
<svg style="position:absolute;left:1560px;top:198px;overflow:visible" width="32" height="32" viewBox="0 0 32 32"><g stroke="#73767c" stroke-width="3.6" stroke-linecap="round"><line x1="4.5" y1="4.5" x2="27" y2="27"/><line x1="27" y1="4.5" x2="4.5" y2="27"/></g></svg>
<div style="position:absolute;left:1130px;top:286px;width:2566px;height:2px;background:#393b40"></div>
<div style="position:absolute;left:1132px;top:274px;width:500px;height:14px;background:#585c63;border-radius:4px"></div>
<div style="position:absolute;left:3620px;top:192.5px;width:8px;height:8px;border-radius:4px;background:#dfe1e5"></div>
<div style="position:absolute;left:3620px;top:210px;width:8px;height:8px;border-radius:4px;background:#dfe1e5"></div>
<div style="position:absolute;left:3620px;top:227px;width:8px;height:8px;border-radius:4px;background:#dfe1e5"></div>
<div style="position:absolute;left:1350px;top:288px;width:2px;height:1682px;background:#313438"></div>
<div class="t" style="left:1051px;width:200px;text-align:right;top:293.8px;font-size:52px;line-height:84px;color:#4b5059;font-family:'Liberation Mono', monospace;transform:scaleY(1.065);transform-origin:0 55.8px">1</div>
<div class="t" style="left:1051px;width:200px;text-align:right;top:377.8px;font-size:52px;line-height:84px;color:#4b5059;font-family:'Liberation Mono', monospace;transform:scaleY(1.065);transform-origin:0 55.8px">2</div>
<div class="t" style="left:1051px;width:200px;text-align:right;top:461.8px;font-size:52px;line-height:84px;color:#4b5059;font-family:'Liberation Mono', monospace;transform:scaleY(1.065);transform-origin:0 55.8px">3</div>
<div class="t" style="left:1051px;width:200px;text-align:right;top:545.9px;font-size:52px;line-height:84px;color:#4b5059;font-family:'Liberation Mono', monospace;transform:scaleY(1.065);transform-origin:0 55.8px">4</div>
<div class="t" style="left:1051px;width:200px;text-align:right;top:629.9px;font-size:52px;line-height:84px;color:#4b5059;font-family:'Liberation Mono', monospace;transform:scaleY(1.065);transform-origin:0 55.8px">5</div>
<div class="t" style="left:1051px;width:200px;text-align:right;top:713.9px;font-size:52px;line-height:84px;color:#4b5059;font-family:'Liberation Mono', monospace;transform:scaleY(1.065);transform-origin:0 55.8px">6</div>
<div class="t" style="left:1051px;width:200px;text-align:right;top:797.9px;font-size:52px;line-height:84px;color:#4b5059;font-family:'Liberation Mono', monospace;transform:scaleY(1.065);transform-origin:0 55.8px">7</div>
<div class="t" style="left:1051px;width:200px;text-align:right;top:882.0px;font-size:52px;line-height:84px;color:#4b5059;font-family:'Liberation Mono', monospace;transform:scaleY(1.065);transform-origin:0 55.8px">8</div>
<div class="t" style="left:1051px;width:200px;text-align:right;top:966.0px;font-size:52px;line-height:84px;color:#4b5059;font-family:'Liberation Mono', monospace;transform:scaleY(1.065);transform-origin:0 55.8px">9</div>
<div class="t" style="left:1051px;width:200px;text-align:right;top:1050.0px;font-size:52px;line-height:84px;color:#4b5059;font-family:'Liberation Mono', monospace;transform:scaleY(1.065);transform-origin:0 55.8px">10</div>
<div class="t" style="left:1051px;width:200px;text-align:right;top:1134.1px;font-size:52px;line-height:84px;color:#4b5059;font-family:'Liberation Mono', monospace;transform:scaleY(1.065);transform-origin:0 55.8px">11</div>
<div class="t" style="left:1051px;width:200px;text-align:right;top:1218.1px;font-size:52px;line-height:84px;color:#4b5059;font-family:'Liberation Mono', monospace;transform:scaleY(1.065);transform-origin:0 55.8px">12</div>
<div class="t" style="left:1051px;width:200px;text-align:right;top:1302.1px;font-size:52px;line-height:84px;color:#4b5059;font-family:'Liberation Mono', monospace;transform:scaleY(1.065);transform-origin:0 55.8px">13</div>
<div class="t" style="left:1051px;width:200px;text-align:right;top:1386.2px;font-size:52px;line-height:84px;color:#4b5059;font-family:'Liberation Mono', monospace;transform:scaleY(1.065);transform-origin:0 55.8px">14</div>
<div class="t" style="left:1051px;width:200px;text-align:right;top:1470.2px;font-size:52px;line-height:84px;color:#4b5059;font-family:'Liberation Mono', monospace;transform:scaleY(1.065);transform-origin:0 55.8px">15</div>
<div class="t" style="left:1051px;width:200px;text-align:right;top:1554.2px;font-size:52px;line-height:84px;color:#4b5059;font-family:'Liberation Mono', monospace;transform:scaleY(1.065);transform-origin:0 55.8px">16</div>
<div class="t" style="left:1051px;width:200px;text-align:right;top:1638.2px;font-size:52px;line-height:84px;color:#4b5059;font-family:'Liberation Mono', monospace;transform:scaleY(1.065);transform-origin:0 55.8px">17</div>
<div class="t" style="left:1051px;width:200px;text-align:right;top:1722.3px;font-size:52px;line-height:84px;color:#4b5059;font-family:'Liberation Mono', monospace;transform:scaleY(1.065);transform-origin:0 55.8px">18</div>
<div class="t" style="left:1051px;width:200px;text-align:right;top:1806.3px;font-size:52px;line-height:84px;color:#4b5059;font-family:'Liberation Mono', monospace;transform:scaleY(1.065);transform-origin:0 55.8px">19</div>
<div class="t" style="left:1051px;width:200px;text-align:right;top:1890.3px;font-size:52px;line-height:84px;color:#4b5059;font-family:'Liberation Mono', monospace;transform:scaleY(1.065);transform-origin:0 55.8px">20</div>
<div style="position:absolute;left:1355px;top:288px;width:2339px;height:1682px;overflow:hidden">
<div class="t" style="left:-31.2px;top:6.2px;font-size:52px;line-height:84px;color:#bcbec4;font-family:'Liberation Mono', monospace;white-space:pre;transform:scaleY(1.06);transform-origin:0 55.8px"><span style="color:#cf8e6d">package</span> <span style="color:#b3be7a">controllers</span></div>
<div class="t" style="left:-31.2px;top:90.2px;font-size:52px;line-height:84px;color:#bcbec4;font-family:'Liberation Mono', monospace;white-space:pre;transform:scaleY(1.06);transform-origin:0 55.8px"></div>
<div class="t" style="left:-31.2px;top:174.2px;font-size:52px;line-height:84px;color:#bcbec4;font-family:'Liberation Mono', monospace;white-space:pre;transform:scaleY(1.06);transform-origin:0 55.8px"><span style="color:#cf8e6d">import</span> (</div>
<div class="t" style="left:-31.2px;top:258.3px;font-size:52px;line-height:84px;color:#bcbec4;font-family:'Liberation Mono', monospace;white-space:pre;transform:scaleY(1.06);transform-origin:0 55.8px">    <span style="color:#6aab73">"github.com/gin-gonic/gin"</span></div>
<div class="t" style="left:-31.2px;top:342.3px;font-size:52px;line-height:84px;color:#bcbec4;font-family:'Liberation Mono', monospace;white-space:pre;transform:scaleY(1.06);transform-origin:0 55.8px">    <span style="color:#6aab73">"go-gin-bookstore/models"</span></div>
<div class="t" style="left:-31.2px;top:426.3px;font-size:52px;line-height:84px;color:#bcbec4;font-family:'Liberation Mono', monospace;white-space:pre;transform:scaleY(1.06);transform-origin:0 55.8px">    <span style="color:#6aab73">"log/slog"</span></div>
<div class="t" style="left:-31.2px;top:510.3px;font-size:52px;line-height:84px;color:#bcbec4;font-family:'Liberation Mono', monospace;white-space:pre;transform:scaleY(1.06);transform-origin:0 55.8px">    <span style="color:#6aab73">"net/http"</span></div>
<div class="t" style="left:-31.2px;top:594.4px;font-size:52px;line-height:84px;color:#bcbec4;font-family:'Liberation Mono', monospace;white-space:pre;transform:scaleY(1.06);transform-origin:0 55.8px">    <span style="color:#6aab73">"strconv"</span></div>
<div class="t" style="left:-31.2px;top:678.4px;font-size:52px;line-height:84px;color:#bcbec4;font-family:'Liberation Mono', monospace;white-space:pre;transform:scaleY(1.06);transform-origin:0 55.8px">)</div>
<div class="t" style="left:-31.2px;top:762.4px;font-size:52px;line-height:84px;color:#bcbec4;font-family:'Liberation Mono', monospace;white-space:pre;transform:scaleY(1.06);transform-origin:0 55.8px"></div>
<div class="t" style="left:-31.2px;top:846.5px;font-size:52px;line-height:84px;color:#bcbec4;font-family:'Liberation Mono', monospace;white-space:pre;transform:scaleY(1.06);transform-origin:0 55.8px"><span style="color:#cf8e6d">func</span> <span style="color:#56a8f5">getAndValidateCustomer</span>(c *<span style="color:#b3be7a">gin</span>.<span style="color:#5fb2c2">Context</span>, customer <span style="color:#cf8e6d">interface</span>{}) (<span style="color:#cf7d36">int64</span>, <span style="color:#cf7d36">bool</span>) {</div>
<div class="t" style="left:-31.2px;top:930.5px;font-size:52px;line-height:84px;color:#bcbec4;font-family:'Liberation Mono', monospace;white-space:pre;transform:scaleY(1.06);transform-origin:0 55.8px">    customerID, ok := <span style="color:#b9a47c">parseCustomerId</span>(c)</div>
<div class="t" style="left:-31.2px;top:1014.5px;font-size:52px;line-height:84px;color:#bcbec4;font-family:'Liberation Mono', monospace;white-space:pre;transform:scaleY(1.06);transform-origin:0 55.8px">    <span style="color:#cf8e6d">if</span> !ok {</div>
<div class="t" style="left:-31.2px;top:1098.6px;font-size:52px;line-height:84px;color:#bcbec4;font-family:'Liberation Mono', monospace;white-space:pre;transform:scaleY(1.06);transform-origin:0 55.8px">        <span style="color:#cf8e6d">return</span> <span style="color:#2aacb8">0</span>, <span style="color:#cf7d36">false</span></div>
<div class="t" style="left:-31.2px;top:1182.6px;font-size:52px;line-height:84px;color:#bcbec4;font-family:'Liberation Mono', monospace;white-space:pre;transform:scaleY(1.06);transform-origin:0 55.8px">    }</div>
<div class="t" style="left:-31.2px;top:1266.6px;font-size:52px;line-height:84px;color:#bcbec4;font-family:'Liberation Mono', monospace;white-space:pre;transform:scaleY(1.06);transform-origin:0 55.8px">    <span style="color:#cf8e6d">if</span> !<span style="color:#b9a47c">bindCustomerData</span>(c, customer) {</div>
<div class="t" style="left:-31.2px;top:1350.6px;font-size:52px;line-height:84px;color:#bcbec4;font-family:'Liberation Mono', monospace;white-space:pre;transform:scaleY(1.06);transform-origin:0 55.8px">        <span style="color:#cf8e6d">return</span> <span style="color:#2aacb8">0</span>, <span style="color:#cf7d36">false</span></div>
<div class="t" style="left:-31.2px;top:1434.7px;font-size:52px;line-height:84px;color:#bcbec4;font-family:'Liberation Mono', monospace;white-space:pre;transform:scaleY(1.06);transform-origin:0 55.8px">    }</div>
<div class="t" style="left:-31.2px;top:1518.7px;font-size:52px;line-height:84px;color:#bcbec4;font-family:'Liberation Mono', monospace;white-space:pre;transform:scaleY(1.06);transform-origin:0 55.8px">    <span style="color:#cf8e6d">return</span> customerID, <span style="color:#cf7d36">true</span></div>
<div class="t" style="left:-31.2px;top:1602.7px;font-size:52px;line-height:84px;color:#bcbec4;font-family:'Liberation Mono', monospace;white-space:pre;transform:scaleY(1.06);transform-origin:0 55.8px">}</div>
</div>
<div style="position:absolute;left:1438px;top:1380px;width:2px;height:84px;background:#313438"></div>
<div style="position:absolute;left:1438px;top:1632px;width:2px;height:84px;background:#313438"></div>
<svg style="position:absolute;left:3622px;top:318px;overflow:visible" width="50" height="40" viewBox="0 0 50 40"><polyline points="6.5,19 17,29.5 41.5,7" fill="none" stroke="#5fa36a" stroke-width="6" stroke-linecap="round" stroke-linejoin="round"/></svg>
<div style="position:absolute;left:3658px;top:388px;width:24px;height:340px;background:#3c3d40;border-radius:12px"></div>
<div style="position:absolute;left:1130px;top:1970px;width:2570px;height:2px;background:#2b2d30"></div>
<div class="t" style="left:1172.7px;top:1981.0px;font-size:49px;line-height:64px;color:#a0a3a9;font-weight:normal;font-family:'Liberation Sans', sans-serif;transform:scaleX(0.9861);transform-origin:0 0;">*Server.DeleteCustomer(c *gin.Context)</div>
<div style="position:absolute;left:3700px;top:144px;width:140px;height:1910px;background:#2b2d30"></div>
<svg style="position:absolute;left:3700px;top:140px;overflow:visible" width="140" height="560" viewBox="0 0 140 560"><g fill="none" stroke="#ced0d6" stroke-width="5" stroke-linecap="round" stroke-linejoin="round"><path d="M74.6 44.8 Q51.5 44 51.5 70 V73 L43.2 90.4 H95.3 L86.2 73 V68"/></g><path d="M61.4 99 H76.3 Q74 106 68.85 106 Q63.7 106 61.4 99 Z" fill="#ced0d6"/><circle cx="91.5" cy="50.1" r="12.1" fill="#548af7"/></svg>
<svg style="position:absolute;left:0px;top:0px;overflow:visible" width="3840" height="700" viewBox="0 0 3840 700"><g fill="none" stroke="#ced0d6" stroke-width="5" stroke-linecap="round"><path d="M3745.7 330.5 C3749.4 329.7 3760.4 324.8 3768.0 325.6 C3775.6 326.4 3786.5 331.4 3791.2 335.5 C3795.9 339.6 3796.8 345.7 3796.2 350.4 C3795.6 355.1 3792.3 360.9 3787.9 363.6 C3783.5 366.4 3774.9 367.4 3769.7 366.9 C3764.4 366.3 3758.6 362.8 3756.4 360.3 C3754.2 357.8 3755.0 354.2 3756.4 352.1 C3757.8 350.0 3762.2 347.5 3764.7 347.9 C3767.2 348.3 3770.2 353.4 3771.3 354.5"/><path d="M3792.0 375.2 C3788.3 376.0 3777.6 380.7 3769.7 380.2 C3761.8 379.7 3749.4 376.4 3744.8 372.0 C3740.2 367.6 3741.0 358.8 3742.4 353.7 C3743.8 348.6 3748.6 343.9 3753.1 341.3 C3757.6 338.7 3765.0 337.3 3769.7 338.0 C3774.4 338.7 3779.4 342.6 3781.3 345.4 C3783.2 348.1 3782.7 352.4 3781.3 354.5 C3779.9 356.6 3775.2 357.8 3773.0 357.8 C3770.8 357.8 3768.8 355.1 3768.0 354.5"/></g><g fill="none" stroke="#ced0d6" stroke-width="5" stroke-linecap="round"><ellipse cx="3769" cy="473.6" rx="25.5" ry="9.6"/><path d="M3743.5 473.6 V512.6 A25.5 9.6 0 0 0 3794.5 512.6 V473.6"/><path d="M3743.5 486.6 A25.5 9.6 0 0 0 3794.5 486.6"/><path d="M3743.5 499.6 A25.5 9.6 0 0 0 3794.5 499.6"/></g><g fill="none" stroke="#ced0d6" stroke-width="5" stroke-linejoin="round" stroke-linecap="round"><path d="M3768.7 600.5 L3796.8 616.5 V648 L3768.7 664 L3740.6 648 V616.5 Z"/><line x1="3768.8" y1="632.2" x2="3794" y2="646.5"/></g><path d="M3768.8 625.5 L3774.6 628.8 V635.5 L3768.8 638.8 L3763 635.5 V628.8 Z" fill="#ced0d6"/></svg>
<div style="position:absolute;left:50px;top:2094px;width:28px;height:28px;border:3.5px solid #548af7;background:#25324d;border-radius:5px;box-sizing:border-box"></div>
<div class="t" style="left:92.2px;top:2073.3px;font-size:49px;line-height:64px;color:#a0a3a9;font-weight:normal;font-family:'Liberation Sans', sans-serif;transform:scaleX(1.0409);transform-origin:0 0;">go-gin-bookstore</div>
<svg style="position:absolute;left:509.5px;top:2088.5px;overflow:visible" width="20" height="32" viewBox="0 0 20 32"><polyline points="3,3 16.5,15.5 3,28" fill="none" stroke="#b4b6bb" stroke-width="3.2" stroke-linecap="round" stroke-linejoin="round"/></svg>
<div class="t" style="left:561.8px;top:2073.3px;font-size:49px;line-height:64px;color:#a0a3a9;font-weight:normal;font-family:'Liberation Sans', sans-serif;transform:scaleX(1.0094);transform-origin:0 0;">core</div>
<svg style="position:absolute;left:691.6px;top:2088.5px;overflow:visible" width="20" height="32" viewBox="0 0 20 32"><polyline points="3,3 16.5,15.5 3,28" fill="none" stroke="#b4b6bb" stroke-width="3.2" stroke-linecap="round" stroke-linejoin="round"/></svg>
<div class="t" style="left:744.6px;top:2073.3px;font-size:49px;line-height:64px;color:#a0a3a9;font-weight:normal;font-family:'Liberation Sans', sans-serif;transform:scaleX(1.0131);transform-origin:0 0;">controllers</div>
<svg style="position:absolute;left:1008.5px;top:2088.5px;overflow:visible" width="20" height="32" viewBox="0 0 20 32"><polyline points="3,3 16.5,15.5 3,28" fill="none" stroke="#b4b6bb" stroke-width="3.2" stroke-linecap="round" stroke-linejoin="round"/></svg>
<svg style="position:absolute;left:1068px;top:2080.2px;overflow:visible" width="40" height="48" viewBox="0 0 40 48"><g stroke="#1b2b38" stroke-width="0.9"><path d="M2.8 9 L1.6 3.4 L7 5 Z" fill="#5fa8d6"/><path d="M37.2 9 L38.4 3.4 L33 5 Z" fill="#5fa8d6"/><ellipse cx="7.6" cy="45.6" rx="3" ry="2.7" fill="#e0ac86"/><ellipse cx="32.6" cy="45.6" rx="3" ry="2.7" fill="#e0ac86"/><path d="M2.4 19 C2.4 7 10 1.2 20 1.2 C30 1.2 37.6 7 37.6 19 V33 C37.6 42 30 46.6 20 46.6 C10 46.6 2.4 42 2.4 33 Z" fill="#5fa8d6"/><ellipse cx="2.2" cy="30.6" rx="4" ry="2.4" transform="rotate(-40 2.2 30.6)" fill="#e0ac86"/><ellipse cx="37.8" cy="30.6" rx="4" ry="2.4" transform="rotate(40 37.8 30.6)" fill="#e0ac86"/></g><circle cx="12" cy="13" r="5.6" fill="#fff"/><circle cx="28" cy="13" r="5.6" fill="#fff"/><circle cx="10.4" cy="13" r="2.6" fill="#000"/><circle cx="29.6" cy="13" r="2.6" fill="#000"/><ellipse cx="20.3" cy="18.6" rx="3.3" ry="1.7" fill="#d9a785"/><ellipse cx="20.3" cy="17.5" rx="1.7" ry="1.4" fill="#000"/><rect x="18.6" y="19.7" width="3.6" height="2.6" fill="#fff"/></svg>
<div class="t" style="left:1130.2px;top:2073.3px;font-size:49px;line-height:64px;color:#a0a3a9;font-weight:normal;font-family:'Liberation Sans', sans-serif;transform:scaleX(1.0187);transform-origin:0 0;">customer.go</div>
<div class="t" style="left:2428.2px;top:2075.0px;font-size:49px;line-height:64px;color:#a0a3a9;font-weight:normal;font-family:'Liberation Sans', sans-serif;transform:scaleX(0.9632);transform-origin:0 0;">85:2</div>
<svg style="position:absolute;left:2570px;top:2075px;overflow:visible" width="80" height="65" viewBox="0 0 80 65"><g fill="none" stroke="#ced0d6" stroke-width="3.6" stroke-linecap="round"><path d="M19.7 15.9 Q33 11 47 17"/><ellipse cx="35" cy="33" rx="17.5" ry="10.5"/><ellipse cx="36" cy="33" rx="8" ry="4.5"/><path d="M27 48.5 Q40 54 52.5 49"/></g><line x1="14.8" y1="54.3" x2="57.4" y2="11.2" stroke="#2b2d30" stroke-width="9" stroke-linecap="round"/><line x1="14.8" y1="54.3" x2="57.4" y2="11.2" stroke="#ced0d6" stroke-width="3.6" stroke-linecap="round"/></svg>
<div class="t" style="left:2690.7px;top:2075.0px;font-size:49px;line-height:64px;color:#a0a3a9;font-weight:normal;font-family:'Liberation Sans', sans-serif;transform:scaleX(0.9894);transform-origin:0 0;">AWS: Unable to connect</div>
<div class="t" style="left:3277.6px;top:2075.0px;font-size:49px;line-height:64px;color:#a0a3a9;font-weight:normal;font-family:'Liberation Sans', sans-serif;transform:scaleX(0.8514);transform-origin:0 0;">LF</div>
<div class="t" style="left:3386.6px;top:2075.0px;font-size:49px;line-height:64px;color:#a0a3a9;font-weight:normal;font-family:'Liberation Sans', sans-serif;transform:scaleX(0.9733);transform-origin:0 0;">UTF-8</div>
<div class="t" style="left:3582.2px;top:2075.0px;font-size:49px;line-height:64px;color:#a0a3a9;font-weight:normal;font-family:'Liberation Sans', sans-serif;transform:scaleX(1.0065);transform-origin:0 0;">Tab</div>
<svg style="position:absolute;left:3715px;top:2075px;overflow:visible" width="80" height="65" viewBox="0 0 80 65"><g fill="none" stroke="#ced0d6" stroke-width="3.8" stroke-linecap="round" stroke-linejoin="round"><rect x="17.2" y="27.9" width="31.5" height="23.9" rx="5.5"/><path d="M41.9 26 V23.95 A8.65 8.65 0 0 1 59.2 23.95 V28.7"/><line x1="33" y1="35.4" x2="33" y2="44.2"/></g></svg></body></html>
